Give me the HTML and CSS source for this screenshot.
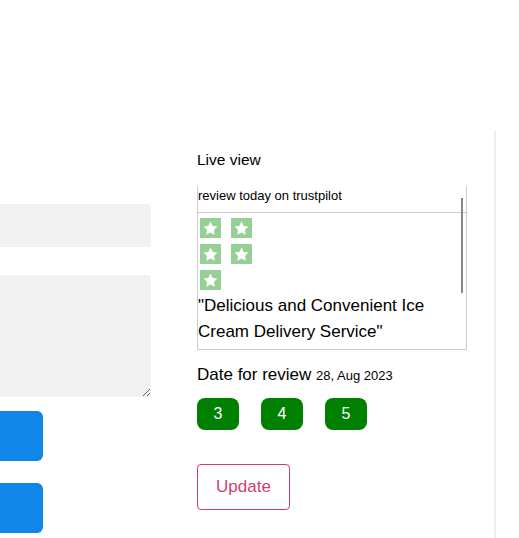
FILE: index.html
```html
<!DOCTYPE html>
<html lang="en">
<head>
<meta charset="UTF-8">
<meta name="viewport" content="width=device-width, initial-scale=1.0">
<title>Review editor</title>
<link rel="stylesheet" href="styles.css">
</head>
<body>

<div class="page">
  <div class="editor">
    <input class="field" type="text">
    <textarea class="field area"></textarea>
    <button class="blue-btn"></button>
    <button class="blue-btn"></button>
  </div>

  <div class="preview">
    <div class="label">Live view</div>
    <div class="live-box">
      <div class="live-head">review today on trustpilot</div>
      <div class="stars">
        <span class="star"><svg viewBox="0 0 24 24" width="19" height="19"><path d="M12 3.2l2.7 5.5 6 .9-4.35 4.25 1.03 6L12 17l-5.38 2.85 1.03-6L3.3 9.6l6-.9z" fill="#fff"/></svg></span>
        <span class="star"><svg viewBox="0 0 24 24" width="19" height="19"><path d="M12 3.2l2.7 5.5 6 .9-4.35 4.25 1.03 6L12 17l-5.38 2.85 1.03-6L3.3 9.6l6-.9z" fill="#fff"/></svg></span>
        <span class="star"><svg viewBox="0 0 24 24" width="19" height="19"><path d="M12 3.2l2.7 5.5 6 .9-4.35 4.25 1.03 6L12 17l-5.38 2.85 1.03-6L3.3 9.6l6-.9z" fill="#fff"/></svg></span>
        <span class="star"><svg viewBox="0 0 24 24" width="19" height="19"><path d="M12 3.2l2.7 5.5 6 .9-4.35 4.25 1.03 6L12 17l-5.38 2.85 1.03-6L3.3 9.6l6-.9z" fill="#fff"/></svg></span>
        <span class="star"><svg viewBox="0 0 24 24" width="19" height="19"><path d="M12 3.2l2.7 5.5 6 .9-4.35 4.25 1.03 6L12 17l-5.38 2.85 1.03-6L3.3 9.6l6-.9z" fill="#fff"/></svg></span>
      </div>
      <div class="quote">"Delicious and Convenient Ice Cream Delivery Service"</div>
      <div class="scroll-thumb"></div>
    </div>

    <div class="date">Date for review <small>28, Aug 2023</small></div>

    <div class="days">
      <span class="day">3</span>
      <span class="day">4</span>
      <span class="day">5</span>
    </div>

    <button class="update">Update</button>
  </div>
</div>

</body>
</html>
```

FILE: styles.css
```css
body {
  margin: 0;
  font-family: "Liberation Sans", Arial, sans-serif;
  color: #000;
  overflow: hidden;
}
.page {
  display: flex;
  gap: 46px;
  padding-top: 131px;
}
.editor {
  width: 300px;
  margin-left: -149px;
  display: flex;
  flex-direction: column;
  align-items: flex-start;
}
.field {
  display: block;
  width: 300px;
  box-sizing: border-box;
  border: none;
  border-radius: 4px;
  background-color: #f1f1f1;
  font-family: inherit;
}
input.field {
  height: 43px;
  margin-top: 73px;
}
.area {
  height: 122px;
  margin-top: 28px;
  resize: vertical;
}
.blue-btn {
  width: 192px;
  height: 50px;
  border: none;
  border-radius: 6px;
  background-color: #1087e8;
  margin-top: 22px;
}
.area + .blue-btn {
  margin-top: 14px;
}
.preview {
  width: 270px;
  padding-right: 27px;
  border-right: 2px solid #eeeeee;
  height: 420px;
}
.label {
  font-size: 15.5px;
  line-height: 16px;
  margin-top: 21px;
}
.live-box {
  position: relative;
  margin-top: 18px;
  height: 163px;
  border: 1px solid #cccccc;
  border-top: none;
}
.live-head {
  font-size: 13px;
  line-height: 14px;
  padding-top: 3px;
  height: 23px;
  border-bottom: 1px solid #cccccc;
}
.stars {
  display: flex;
  flex-wrap: wrap;
  gap: 6px 10px;
  width: 52px;
  margin: 5px 0 0 2px;
}
.star {
  width: 21px;
  height: 20px;
  background-color: #97d097;
  display: flex;
  align-items: center;
  justify-content: center;
}
.star svg {
  display: block;
}
.quote {
  font-size: 17px;
  line-height: 26px;
  margin-top: 3px;
}
.scroll-thumb {
  position: absolute;
  right: 3px;
  top: 12px;
  width: 2px;
  height: 95px;
  background-color: #888888;
}
.date {
  font-size: 17px;
  line-height: 18px;
  margin-top: 16px;
}
.date small {
  font-size: 13px;
}
.days {
  display: flex;
  gap: 22px;
  margin-top: 13px;
}
.day {
  width: 42px;
  height: 32px;
  line-height: 32px;
  text-align: center;
  border-radius: 8px;
  background-color: #008000;
  color: #fff;
  font-size: 16px;
}
.update {
  margin-top: 34px;
  width: 93px;
  height: 46px;
  background: #fff;
  border: 1px solid #d23c6e;
  border-radius: 4px;
  color: #cf3f6f;
  font-family: inherit;
  font-size: 17px;
}
```
